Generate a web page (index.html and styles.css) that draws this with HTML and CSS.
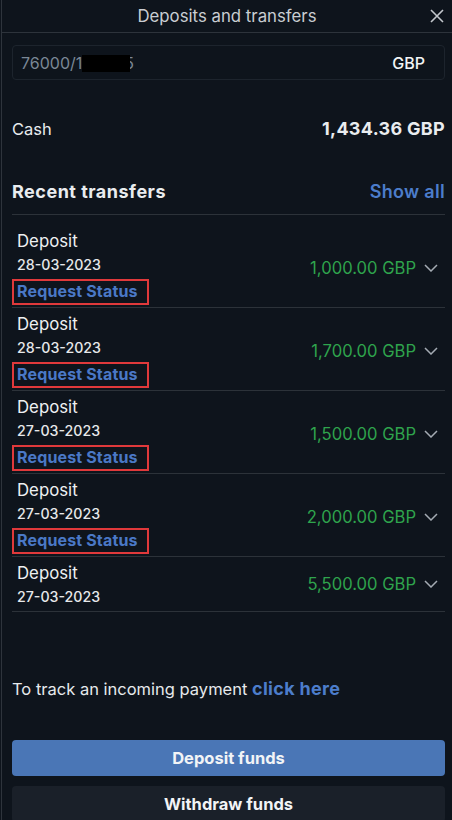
FILE: index.html
```html
<!DOCTYPE html>
<html>
<head>
<meta charset="utf-8">
<link rel="stylesheet" href="styles.css">
</head>
<body>
<div class="panel">
  <header class="top">
    <h1 class="title">Deposits and transfers</h1>
    <svg class="close" width="16" height="16" viewBox="0 0 16 16"><path d="M2 2 L14 14 M14 2 L2 14" stroke="#c3c7cc" stroke-width="1.6" fill="none"/></svg>
  </header>
  <div class="content">
    <div class="account">
      <span class="acc-no">76000/1<span class="redact"></span>5</span>
      <span class="acc-cur">GBP</span>
    </div>
    <div class="cash">
      <span>Cash</span>
      <span class="cash-val">1,434.36 GBP</span>
    </div>
    <div class="recent-head">
      <span class="recent-title">Recent transfers</span>
      <span class="show-all">Show all</span>
    </div>
    <ul class="list">
      <li class="row">
        <div class="info"><div class="type">Deposit</div><div class="date">28-03-2023</div><div class="req">Request Status</div></div>
        <div class="amt">1,000.00 GBP <svg class="chev" width="14" height="8" viewBox="0 0 14 8"><path d="M1 1 L7 7 L13 1" stroke="#a4abb3" stroke-width="1.5" fill="none"/></svg></div>
      </li>
      <li class="row">
        <div class="info"><div class="type">Deposit</div><div class="date">28-03-2023</div><div class="req">Request Status</div></div>
        <div class="amt">1,700.00 GBP <svg class="chev" width="14" height="8" viewBox="0 0 14 8"><path d="M1 1 L7 7 L13 1" stroke="#a4abb3" stroke-width="1.5" fill="none"/></svg></div>
      </li>
      <li class="row">
        <div class="info"><div class="type">Deposit</div><div class="date">27-03-2023</div><div class="req">Request Status</div></div>
        <div class="amt">1,500.00 GBP <svg class="chev" width="14" height="8" viewBox="0 0 14 8"><path d="M1 1 L7 7 L13 1" stroke="#a4abb3" stroke-width="1.5" fill="none"/></svg></div>
      </li>
      <li class="row">
        <div class="info"><div class="type">Deposit</div><div class="date">27-03-2023</div><div class="req">Request Status</div></div>
        <div class="amt">2,000.00 GBP <svg class="chev" width="14" height="8" viewBox="0 0 14 8"><path d="M1 1 L7 7 L13 1" stroke="#a4abb3" stroke-width="1.5" fill="none"/></svg></div>
      </li>
      <li class="row">
        <div class="info"><div class="type">Deposit</div><div class="date">27-03-2023</div></div>
        <div class="amt">5,500.00 GBP <svg class="chev" width="14" height="8" viewBox="0 0 14 8"><path d="M1 1 L7 7 L13 1" stroke="#a4abb3" stroke-width="1.5" fill="none"/></svg></div>
      </li>
    </ul>
    <p class="track">To track an incoming payment <span class="link">click here</span></p>
    <button class="btn btn-primary">Deposit funds</button>
    <button class="btn btn-secondary">Withdraw funds</button>
  </div>
</div>
</body>
</html>
```
FILE: styles.css
```css
* { box-sizing: border-box; }
html, body { margin: 0; padding: 0; background: #0e141c; height: 100%; overflow: hidden; }
body { padding-left: 1px; font-family: Inter, "Liberation Sans", sans-serif; color: #e9ecef; }
.panel { border-left: 1px solid #2e343c; min-height: 820px; }
.top { height: 33px; border-bottom: 1px solid #2d333b; display: flex; align-items: center; justify-content: center; position: relative; }
.title { margin: 0; font-size: 16.8px; font-weight: 400; color: #c9cdd2; line-height: 30px; }
.close { position: absolute; right: 7px; top: 8px; }
.content { padding: 0 7px 0 10px; }
.account { margin-top: 12px; height: 35px; border: 1px solid #1d242d; border-radius: 4px; display: flex; align-items: center; justify-content: space-between; padding: 0 19px 0 8px; font-size: 16px; }
.acc-no { color: #7b8896; }
.redact { display: inline-block; position: relative; width: 48px; height: 17px; background: #000; vertical-align: -3px; margin-right: -6px; }
.acc-cur { color: #f2f4f6; font-weight: 500; }
.cash { margin-top: 37px; display: flex; justify-content: space-between; align-items: center; line-height: 24px; font-size: 16.5px; }
.cash-val { font-weight: 700; font-size: 18px; letter-spacing: 0.3px; }
.recent-head { margin-top: 39px; display: flex; justify-content: space-between; align-items: center; line-height: 24px; padding-bottom: 10px; border-bottom: 1px solid #2c3239; }
.recent-title { font-weight: 700; font-size: 18px; letter-spacing: 0.5px; }
.show-all { color: #4c7dcb; font-size: 18px; font-weight: 600; letter-spacing: 0.3px; }
.list { list-style: none; margin: 0; padding: 10px 0 0 0; }
.row { display: flex; justify-content: space-between; align-items: center; padding: 4px 7px 2px 5px; border-bottom: 1px solid #2c3239; }
.type { font-size: 16.8px; line-height: 24px; color: #eef0f2; }
.date { font-size: 14.2px; line-height: 24px; font-weight: 500; color: #e6e8ea; }
.req { margin: 2px 0 0 -5px; border: 2px solid #e0393b; padding: 0 0 0 3px; width: 137px; height: 26px; line-height: 21px; font-size: 16px; font-weight: 700; letter-spacing: 0.15px; color: #4a78c6; white-space: nowrap; }
.amt { color: #2fa44d; font-size: 16.6px; display: flex; align-items: center; gap: 8px; margin-top: 2px; }
.row:last-child .amt { margin-top: -3px; }
.track { margin: 65px 0 0 0; line-height: 24px; font-size: 16.5px; color: #e6e9ec; }
.link { color: #4c7dcb; font-weight: 700; font-size: 18px; letter-spacing: 0.3px; }
.btn { display: block; width: 100%; height: 36px; border: none; border-radius: 4px; font-family: Inter, "Liberation Sans", sans-serif; font-size: 16.5px; font-weight: 700; color: #f2f4f6; }
.btn-primary { margin-top: 39px; background: #4a76b6; }
.btn-secondary { margin-top: 10px; background: #1a2029; }
```
